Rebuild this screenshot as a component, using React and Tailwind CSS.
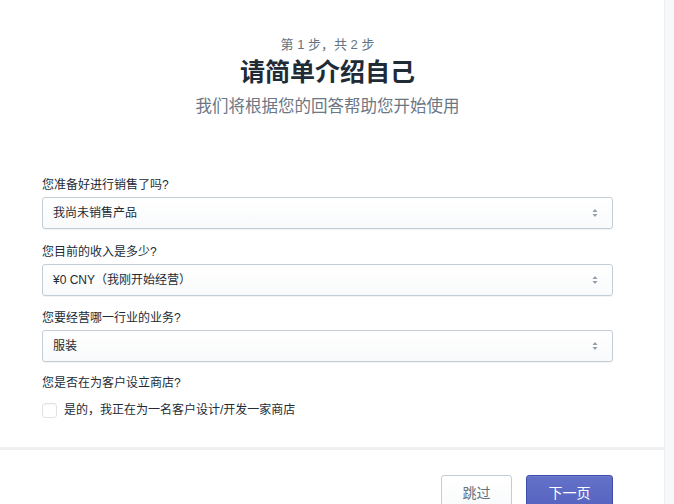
import React from 'react';

const font = { fontFamily: '"Liberation Sans", "Noto Sans CJK SC", sans-serif' };

const SelectArrows = () => (
  <svg width="8" height="10" viewBox="0 0 8 10" className="text-[#919eab]">
    <path d="M4 1 L6.5 4 H1.5 Z" fill="currentColor" />
    <path d="M4 9 L6.5 6 H1.5 Z" fill="currentColor" />
  </svg>
);

const Field = ({ label, value, className }) => (
  <div className={className}>
    <div className="text-[12px] leading-4 text-[#212b36]">{label}</div>
    <div className="mt-1 h-8 flex items-center justify-between rounded-[3px] border border-[#c4cdd5] bg-gradient-to-b from-white to-[#f9fafb] shadow-[0_1px_0_rgba(22,29,37,0.05)] pl-[10px] pr-[13px]">
      <span className="text-[12px] text-[#212b36]">{value}</span>
      <SelectArrows />
    </div>
  </div>
);

export default function App() {
  return (
    <div className="h-[504px] w-[674px] overflow-hidden flex bg-white" style={font}>
      <div className="w-[664px] flex flex-col">
        {/* Intro */}
        <div className="ml-[42px] w-[571px] shrink-0">
          <div className="mt-[37px] text-center text-[13px] leading-4 text-[#637381]">第 1 步，共 2 步</div>
          <h1 className="mt-[3px] text-center text-[25px] leading-8 font-bold text-[#212b36]">请简单介绍自己</h1>
          <p className="mt-2 text-center text-[16.5px] leading-5 text-[#6b7785]">我们将根据您的回答帮助您开始使用</p>
        </div>

        {/* Form */}
        <div className="ml-[42px] w-[571px] shrink-0">
          <Field className="mt-[61px]" label="您准备好进行销售了吗?" value="我尚未销售产品" />
          <Field className="mt-[15px]" label="您目前的收入是多少?" value="¥0 CNY（我刚开始经营）" />
          <Field className="mt-[14px]" label="您要经营哪一行业的业务?" value="服装" />
          <div className="mt-[13px] text-[12px] leading-4 text-[#212b36]">您是否在为客户设立商店?</div>
          <label className="mt-[11px] flex items-center gap-[7px]">
            <span className="h-[15px] w-[15px] rounded-[3px] border border-[#dfe3e8] bg-white shadow-[inset_0_1px_1px_rgba(0,0,0,0.04)]" />
            <span className="text-[12px] leading-4 text-[#212b36]">是的，我正在为一名客户设计/开发一家商店</span>
          </label>
        </div>

        {/* Divider */}
        <div className="mt-[29px] h-[3px] shrink-0 bg-[#eef0f2]" />

        {/* Footer */}
        <div className="mt-[25px] ml-[441px] flex shrink-0 gap-[14px]">
          <button className="h-9 w-[71px] rounded-[3px] border border-[#c4cdd5] bg-gradient-to-b from-white to-[#f9fafb] text-[14px] text-[#637381] shadow-[0_1px_0_rgba(22,29,37,0.05)]">
            跳过
          </button>
          <button className="h-9 w-[87px] rounded-[3px] border border-[#3f4eae] bg-gradient-to-b from-[#6371c7] to-[#5563c1] text-[14px] text-white shadow-[inset_0_1px_0_0_#6f7bcb]">
            下一页
          </button>
        </div>
      </div>
      <div className="flex-1 border-l border-[#eceef0] bg-[#f7f8f9]" />
    </div>
  );
}
